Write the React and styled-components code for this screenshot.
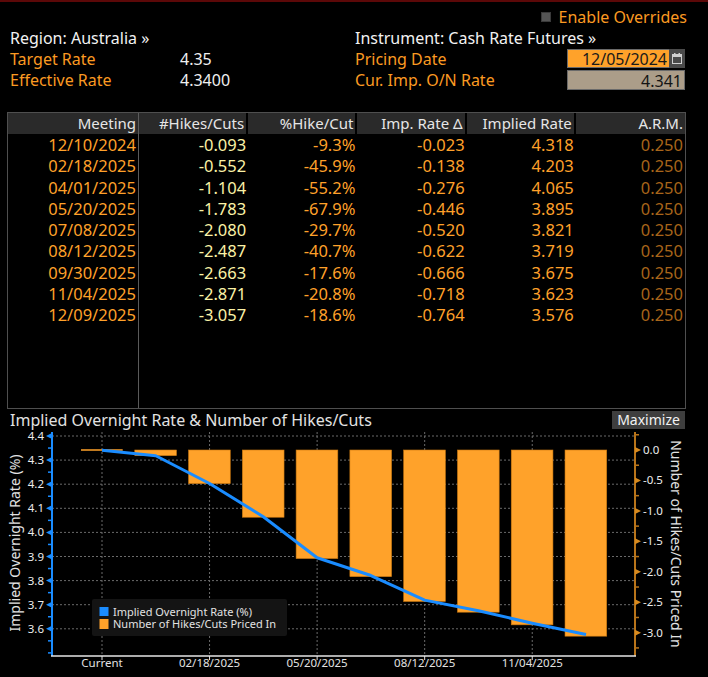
import React from "react";
import styled, { createGlobalStyle } from "styled-components";

const Global = createGlobalStyle`
  html, body { margin: 0; padding: 0; background: #000; }
  body { font-family: "Noto Sans", "Liberation Sans", Arial, sans-serif; }
  * { box-sizing: border-box; }
`;

const ORANGE = "#fb9a22";
const BAR = "#ffa22a";
const BLUE = "#1a8cff";

const Screen = styled.div`
  width: 708px;
  height: 677px;
  background: #000;
  border-top: 2px solid #5c0808;
  overflow: hidden;
  font-size: 16px;
`;

const OverrideRow = styled.div`
  margin-top: 5px;
  height: 20px;
  display: flex;
  justify-content: flex-end;
  align-items: center;
  gap: 8px;
  padding-right: 21px;
  color: ${ORANGE};
  font-size: 16px;
`;

const CheckBox = styled.span`
  width: 10px;
  height: 10px;
  background: #555;
  border: 1px solid #3a3a3a;
`;

const Info = styled.div`
  display: grid;
  grid-template-columns: 345px 1fr;
  padding-left: 10px;
  height: 63px;
`;

const InfoCol = styled.div`
  display: flex;
  flex-direction: column;
`;

const InfoRow = styled.div`
  height: 21px;
  display: flex;
  align-items: center;
  white-space: nowrap;
  color: ${(p) => (p.$head ? "#f2f2f2" : ORANGE)};
`;

const Label = styled.span`
  width: ${(p) => p.$w}px;
  flex: none;
`;

const Value = styled.span`
  color: #f0f0f0;
  font-variant-numeric: tabular-nums;
`;

const DateInput = styled.span`
  width: 102px;
  height: 19px;
  background: ${BAR};
  color: #1a1a1a;
  text-align: right;
  padding-right: 2px;
  line-height: 19px;
  border: 1px solid #6a6a6a;
  border-right: none;
`;

const CalButton = styled.span`
  width: 16px;
  height: 19px;
  background: #4a4a4a;
  display: flex;
  align-items: center;
  justify-content: center;
`;

const RateBox = styled.span`
  width: 118px;
  height: 20px;
  background: #ab9d89;
  color: #141414;
  text-align: right;
  padding-right: 2px;
  line-height: 20px;
  border: 1px solid #6a6a6a;
`;

const Table = styled.div`
  margin: 22px 0 0 7px;
  width: 679px;
  height: 297px;
  border: 1px solid #4f4f4f;
  display: flex;
  flex-direction: column;
`;

const Cols = `131px repeat(5, 1fr)`;

const HeadRow = styled.div`
  display: grid;
  grid-template-columns: ${Cols};
  height: 21px;
  flex: none;
`;

const HeadCell = styled.div`
  background: #2a2a2a;
  color: #e6e6e6;
  font-size: 15px;
  line-height: 21px;
  text-align: right;
  padding-right: 2px;
  white-space: nowrap;
  border-right: ${(p) => (p.$first ? "1px solid #5a5a5a" : "2px solid #000")};
  &:last-child { border-right: none; }
`;

const Body = styled.div`
  flex: 1;
  display: grid;
  grid-template-columns: ${Cols};
`;

const Column = styled.div`
  display: flex;
  flex-direction: column;
  border-right: ${(p) => (p.$first ? "1px solid #5a5a5a" : "none")};
`;

const Cell = styled.div`
  height: 21.3px;
  line-height: 21.3px;
  text-align: right;
  padding-right: 2px;
  font-size: 16.5px;
  color: ${(p) => p.$color};
  font-variant-numeric: tabular-nums;
`;

const ChartHead = styled.div`
  height: 22px;
  display: flex;
  align-items: center;
  justify-content: space-between;
  padding: 0 23px 0 10px;
`;

const ChartTitle = styled.span`
  color: #e2e2e2;
  font-size: 16px;
`;

const MaxButton = styled.span`
  height: 18px;
  width: 73px;
  background: #3e3e3e;
  color: #f2f2f2;
  font-size: 14px;
  line-height: 18px;
  text-align: center;
`;

const ChartSvg = styled.svg`
  display: block;
  overflow: visible;
`;

const rows = [
  ["12/10/2024", "-0.093", "-9.3%", "-0.023", "4.318", "0.250"],
  ["02/18/2025", "-0.552", "-45.9%", "-0.138", "4.203", "0.250"],
  ["04/01/2025", "-1.104", "-55.2%", "-0.276", "4.065", "0.250"],
  ["05/20/2025", "-1.783", "-67.9%", "-0.446", "3.895", "0.250"],
  ["07/08/2025", "-2.080", "-29.7%", "-0.520", "3.821", "0.250"],
  ["08/12/2025", "-2.487", "-40.7%", "-0.622", "3.719", "0.250"],
  ["09/30/2025", "-2.663", "-17.6%", "-0.666", "3.675", "0.250"],
  ["11/04/2025", "-2.871", "-20.8%", "-0.718", "3.623", "0.250"],
  ["12/09/2025", "-3.057", "-18.6%", "-0.764", "3.576", "0.250"],
];

const heads = ["Meeting", "#Hikes/Cuts", "%Hike/Cut", "Imp. Rate \u0394", "Implied Rate", "A.R.M."];
const colColors = ["#ffa12a", "#fbf2a6", "#ffa12a", "#ffa12a", "#ffa12a", "#a8651a"];

const hikes = [0, -0.093, -0.552, -1.104, -1.783, -2.08, -2.487, -2.663, -2.871, -3.057];
const rates = [4.341, 4.318, 4.203, 4.065, 3.895, 3.821, 3.719, 3.675, 3.623, 3.576];

const STEP = 53.78;
const yL = (v) => 5 + (4.4 - v) * 241;
const yR = (v) => 19 - v * 60.9;

function Chart() {
  const leftMajor = [4.4, 4.3, 4.2, 4.1, 4.0, 3.9, 3.8, 3.7, 3.6];
  const leftMinor = [4.35, 4.25, 4.15, 4.05, 3.95, 3.85, 3.75, 3.65, 3.55, 3.5];
  const rightMajor = [0, -0.5, -1, -1.5, -2, -2.5, -3];
  const rightMinor = [0.25, -0.25, -0.75, -1.25, -1.75, -2.25, -2.75, -3.25];
  const vx = [0, 2, 4, 6, 8].map((i) => 102 + STEP * i);
  const xl = ["Current", "02/18/2025", "05/20/2025", "08/12/2025", "11/04/2025"];
  const pts = rates.map((r, i) => `${102 + STEP * i},${yL(r)}`).join(" ");
  const font = '"Noto Sans", "Liberation Sans", sans-serif';
  return (
    <ChartSvg width="708" height="246" viewBox="0 0 708 246" fontFamily={font}>
      {leftMajor.map((v) => (
        <line key={"h" + v} x1="52" x2="635" y1={yL(v)} y2={yL(v)} stroke="#6a6a6a" strokeDasharray="2 2" />
      ))}
      {vx.map((x) => (
        <line key={"v" + x} x1={x} x2={x} y1="1" y2="225" stroke="#6a6a6a" strokeDasharray="2 2" />
      ))}
      {hikes.map((h, i) => {
        const x = 81 + STEP * i;
        if (h === 0) return <line key={i} x1={x} x2={x + 41.7} y1={19} y2={19} stroke={BAR} strokeWidth="1.5" />;
        return (
          <rect key={i} x={x} y={19} width={41.7} height={-h * 60.9} fill={BAR} stroke="#c9770f" strokeWidth="0.6" />
        );
      })}
      <polyline points={pts} fill="none" stroke={BLUE} strokeWidth="3" strokeLinejoin="round" />

      <line x1="52" x2="52" y1="1" y2="225" stroke={BLUE} strokeWidth="2" />
      {leftMajor.map((v) => (
        <g key={"lt" + v}>
          <polygon points={`52,${yL(v) - 3} 52,${yL(v) + 3} 46,${yL(v)}`} fill={BLUE} />
          <text x="44" y={yL(v) + 4} textAnchor="end" fill="#ececec" fontSize="11.5">
            {v.toFixed(1)}
          </text>
        </g>
      ))}
      {leftMinor.map((v) => (
        <line key={"lm" + v} x1="48" x2="52" y1={yL(v)} y2={yL(v)} stroke={BLUE} strokeWidth="1.5" />
      ))}

      <line x1="635" x2="635" y1="1" y2="225" stroke="#b8741a" strokeWidth="2" />
      {rightMajor.map((v) => (
        <g key={"rt" + v}>
          <polygon points={`635,${yR(v) - 3} 635,${yR(v) + 3} 641,${yR(v)}`} fill="#d88a1e" />
          <text x="643" y={yR(v) + 4} fill="#ececec" fontSize="11.5">
            {v === 0 ? "0.0" : v.toFixed(1)}
          </text>
        </g>
      ))}
      {rightMinor.map((v) => (
        <line key={"rm" + v} x1="635" x2="639" y1={yR(v)} y2={yR(v)} stroke="#b8741a" strokeWidth="1.5" />
      ))}

      <line x1="51" x2="636" y1="225" y2="225" stroke="#e6e6e6" strokeWidth="1.5" />
      {vx.map((x) => (
        <line key={"xt" + x} x1={x} x2={x} y1="225" y2="229" stroke="#e6e6e6" strokeWidth="1" />
      ))}
      {vx.map((x, i) => (
        <text key={"xl" + i} x={x} y="236" textAnchor="middle" fill="#e2e2e2" fontSize="11.5">
          {xl[i]}
        </text>
      ))}

      <text transform="translate(20 112) rotate(-90)" textAnchor="middle" fill="#e2e2e2" fontSize="14">
        Implied Overnight Rate (%)
      </text>
      <text transform="translate(671 113) rotate(90)" textAnchor="middle" fill="#e2e2e2" fontSize="14">
        Number of Hikes/Cuts Priced In
      </text>

      <rect x="92" y="168" width="195" height="37" fill="#141414" rx="2" />
      <rect x="99.5" y="176" width="9" height="9" fill={BLUE} />
      <rect x="99.5" y="188" width="9" height="10" fill={BAR} />
      <text x="113" y="184.5" fill="#e2e2e2" fontSize="11">Implied Overnight Rate (%)</text>
      <text x="113" y="197" fill="#e2e2e2" fontSize="11">Number of Hikes/Cuts Priced In</text>
    </ChartSvg>
  );
}

function CalendarIcon() {
  return (
    <svg width="10" height="11" viewBox="0 0 10 11">
      <rect x="0.5" y="1.5" width="9" height="9" fill="none" stroke="#cfcfcf" />
      <rect x="0.5" y="1.5" width="9" height="2.5" fill="#cfcfcf" />
      <rect x="2" y="0" width="1.5" height="2" fill="#cfcfcf" />
      <rect x="6.5" y="0" width="1.5" height="2" fill="#cfcfcf" />
    </svg>
  );
}

export default function App() {
  return (
    <>
      <Global />
      <Screen>
        <OverrideRow>
          <CheckBox />
          <span>Enable Overrides</span>
        </OverrideRow>
        <Info>
          <InfoCol>
            <InfoRow $head>Region: Australia &raquo;</InfoRow>
            <InfoRow>
              <Label $w={170}>Target Rate</Label>
              <Value>4.35</Value>
            </InfoRow>
            <InfoRow>
              <Label $w={170}>Effective Rate</Label>
              <Value>4.3400</Value>
            </InfoRow>
          </InfoCol>
          <InfoCol>
            <InfoRow $head>Instrument: Cash Rate Futures &raquo;</InfoRow>
            <InfoRow>
              <Label $w={212}>Pricing Date</Label>
              <DateInput>12/05/2024</DateInput>
              <CalButton>
                <CalendarIcon />
              </CalButton>
            </InfoRow>
            <InfoRow>
              <Label $w={212}>Cur. Imp. O/N Rate</Label>
              <RateBox>4.341</RateBox>
            </InfoRow>
          </InfoCol>
        </Info>
        <Table>
          <HeadRow>
            {heads.map((h, i) => (
              <HeadCell key={h} $first={i === 0}>
                {h}
              </HeadCell>
            ))}
          </HeadRow>
          <Body>
            {heads.map((h, c) => (
              <Column key={h} $first={c === 0}>
                {rows.map((r) => (
                  <Cell key={r[0]} $color={colColors[c]}>
                    {r[c]}
                  </Cell>
                ))}
              </Column>
            ))}
          </Body>
        </Table>
        <ChartHead>
          <ChartTitle>Implied Overnight Rate &amp; Number of Hikes/Cuts</ChartTitle>
          <MaxButton>Maximize</MaxButton>
        </ChartHead>
        <Chart />
      </Screen>
    </>
  );
}
